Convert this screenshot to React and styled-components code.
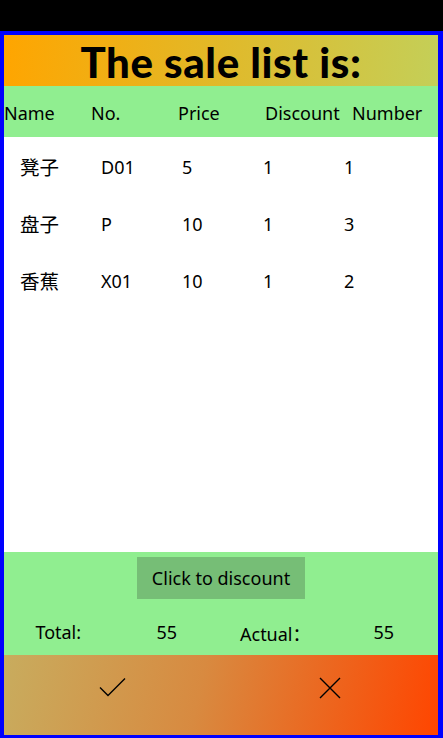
import React from "react";
import styled, { createGlobalStyle } from "styled-components";

const Global = createGlobalStyle`
  html, body { margin: 0; padding: 0; background: #000; }
  body { font-family: "Noto Sans", "Noto Sans CJK SC", sans-serif; }
  #root { padding-top: 31px; }
`;

const Frame = styled.div`
  box-sizing: border-box;
  height: 707px;
  border-style: solid;
  border-color: #0000ff;
  border-width: 4px 5px 3px 4px;
  background: #fff;
  display: flex;
  flex-direction: column;
`;

const Title = styled.div`
  height: 51px;
  flex: none;
  display: flex;
  align-items: center;
  justify-content: center;
  background: linear-gradient(95deg, #ffa500 0%, #e4b725 45%, #c4cf58 100%);
  font-family: "Lato", sans-serif;
  font-weight: 900;
  font-size: 42px;
  letter-spacing: 0.6px;
  color: #000;
  padding-top: 2px;
  box-sizing: border-box;
`;

const HeadRow = styled.div`
  height: 51px;
  flex: none;
  display: grid;
  grid-template-columns: repeat(5, 87px);
  align-items: center;
  background: #90ee90;
  font-size: 18px;
  color: #000;
  padding-top: 3px;
  box-sizing: border-box;
`;

const List = styled.div`
  flex: 1;
  background: #fff;
  padding-top: 1px;
`;

const Row = styled.div`
  height: 57px;
  display: grid;
  grid-template-columns: repeat(5, 81px);
  align-items: center;
  padding-left: 16px;
  font-size: 18px;
  color: #000;
`;

const Cell = styled.span`
  font-size: ${(p) => (p.$cjk ? "19.5px" : "18px")};
`;

const Footer = styled.div`
  height: 103px;
  flex: none;
  background: #90ee90;
  display: flex;
  flex-direction: column;
  align-items: center;
  padding-top: 5px;
  box-sizing: border-box;
`;

const DiscountButton = styled.button`
  width: 168px;
  height: 42px;
  border: none;
  background: #76be76;
  font-family: "Noto Sans", sans-serif;
  font-size: 18px;
  color: #000;
  padding: 0;
`;

const Totals = styled.div`
  align-self: stretch;
  display: grid;
  grid-template-columns: repeat(4, 1fr);
  text-align: center;
  font-size: 18px;
  margin-top: 21px;
`;

const ActionBar = styled.div`
  height: 80px;
  flex: none;
  box-sizing: border-box;
  display: grid;
  grid-template-columns: 1fr 1fr;
  justify-items: center;
  align-items: start;
  padding-top: 22px;
  background: linear-gradient(102deg, #c8ac5e 0%, #d88a40 45%, #ff4500 100%);
`;

const IconButton = styled.div`
  display: flex;
`;

const cols = [
  ["凳子", "D01", "5", "1", "1"],
  ["盘子", "P", "10", "1", "3"],
  ["香蕉", "X01", "10", "1", "2"],
];

export default function App() {
  return (
    <>
      <Global />
      <Frame>
        <Title>The sale list is:</Title>
        <HeadRow>
          <span>Name</span>
          <span>No.</span>
          <span>Price</span>
          <span>Discount</span>
          <span>Number</span>
        </HeadRow>
        <List>
          {cols.map((r, i) => (
            <Row key={i}>
              {r.map((c, j) => (
                <Cell key={j} $cjk={j === 0}>{c}</Cell>
              ))}
            </Row>
          ))}
        </List>
        <Footer>
          <DiscountButton>Click to discount</DiscountButton>
          <Totals>
            <span>Total:</span>
            <span>55</span>
            <span>Actual：</span>
            <span>55</span>
          </Totals>
        </Footer>
        <ActionBar>
          <IconButton>
            <svg width="27" height="20" viewBox="0 0 27 20">
              <polyline points="1,10.5 9,18.5 26,1.5" fill="none" stroke="#000" strokeWidth="1.4" />
            </svg>
          </IconButton>
          <IconButton>
            <svg width="22" height="22" viewBox="0 0 22 22">
              <path d="M1 1 L21 21 M21 1 L1 21" fill="none" stroke="#000" strokeWidth="1.4" />
            </svg>
          </IconButton>
        </ActionBar>
      </Frame>
    </>
  );
}
